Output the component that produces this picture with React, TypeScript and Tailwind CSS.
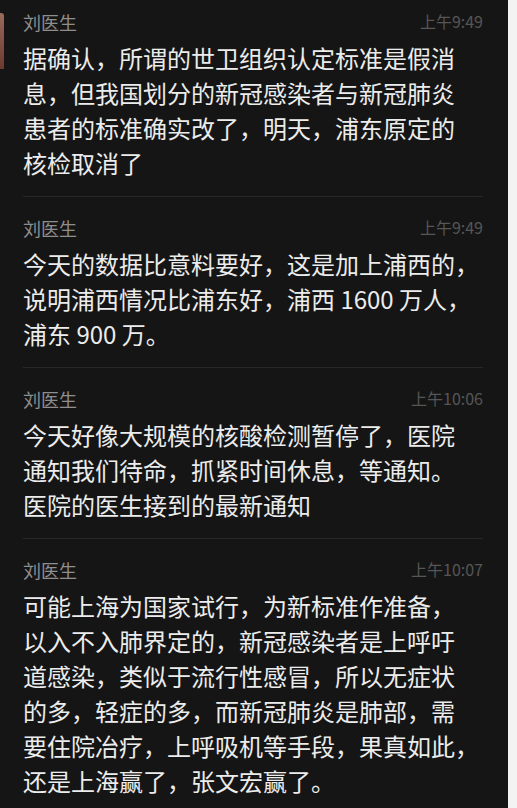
import React from "react";

type Msg = { time: string; lines: string[] };

const msgs: Msg[] = [
  {
    time: "上午9:49",
    lines: [
      "据确认，所谓的世卫组织认定标准是假消",
      "息，但我国划分的新冠感染者与新冠肺炎",
      "患者的标准确实改了，明天，浦东原定的",
      "核检取消了",
    ],
  },
  {
    time: "上午9:49",
    lines: [
      "今天的数据比意料要好，这是加上浦西的，",
      "说明浦西情况比浦东好，浦西 1600 万人，",
      "浦东 900 万。",
    ],
  },
  {
    time: "上午10:06",
    lines: [
      "今天好像大规模的核酸检测暂停了，医院",
      "通知我们待命，抓紧时间休息，等通知。",
      "医院的医生接到的最新通知",
    ],
  },
  {
    time: "上午10:07",
    lines: [
      "可能上海为国家试行，为新标准作准备，",
      "以入不入肺界定的，新冠感染者是上呼吁",
      "道感染，类似于流行性感冒，所以无症状",
      "的多，轻症的多，而新冠肺炎是肺部，需",
      "要住院冶疗，上呼吸机等手段，果真如此，",
      "还是上海赢了，张文宏赢了。",
    ],
  },
];

const font = {
  fontFamily: '"Noto Sans CJK SC", "Noto Sans", sans-serif',
};

export default function App() {
  return (
    <div className="flex h-[808px] w-[517px] overflow-hidden" style={font}>
      <div className="relative flex w-[508px] flex-col bg-[#151515] pl-[23px] pr-[25px]">
        <div className="absolute left-0 top-[13px] h-[56px] w-[4px] rounded-tr-[3px] bg-gradient-to-b from-[#9a6a5c] to-[#6e3a30]" />
        {msgs.map((m, i) => (
          <div
            key={i}
            className={`flex flex-col pb-[16px] ${i === 0 ? "pt-[10px]" : "pt-[19px]"} ${
              i < msgs.length - 1 ? "border-b border-[#272727]" : ""
            }`}
          >
            <div className="flex h-[24px] items-center justify-between">
              <span className="text-[18px] leading-[24px] text-[#8e8e8e]">刘医生</span>
              <span className="-mt-[3px] text-[16px] leading-[20px] text-[#565656]">{m.time}</span>
            </div>
            <div className="mt-[6px] flex flex-col text-[24px] leading-[35px] text-[#ececec]">
              {m.lines.map((l, j) => (
                <div key={j} className="whitespace-nowrap">
                  {l}
                </div>
              ))}
            </div>
          </div>
        ))}
      </div>
      <div className="flex-1 bg-[#f3f3f3]" />
    </div>
  );
}
